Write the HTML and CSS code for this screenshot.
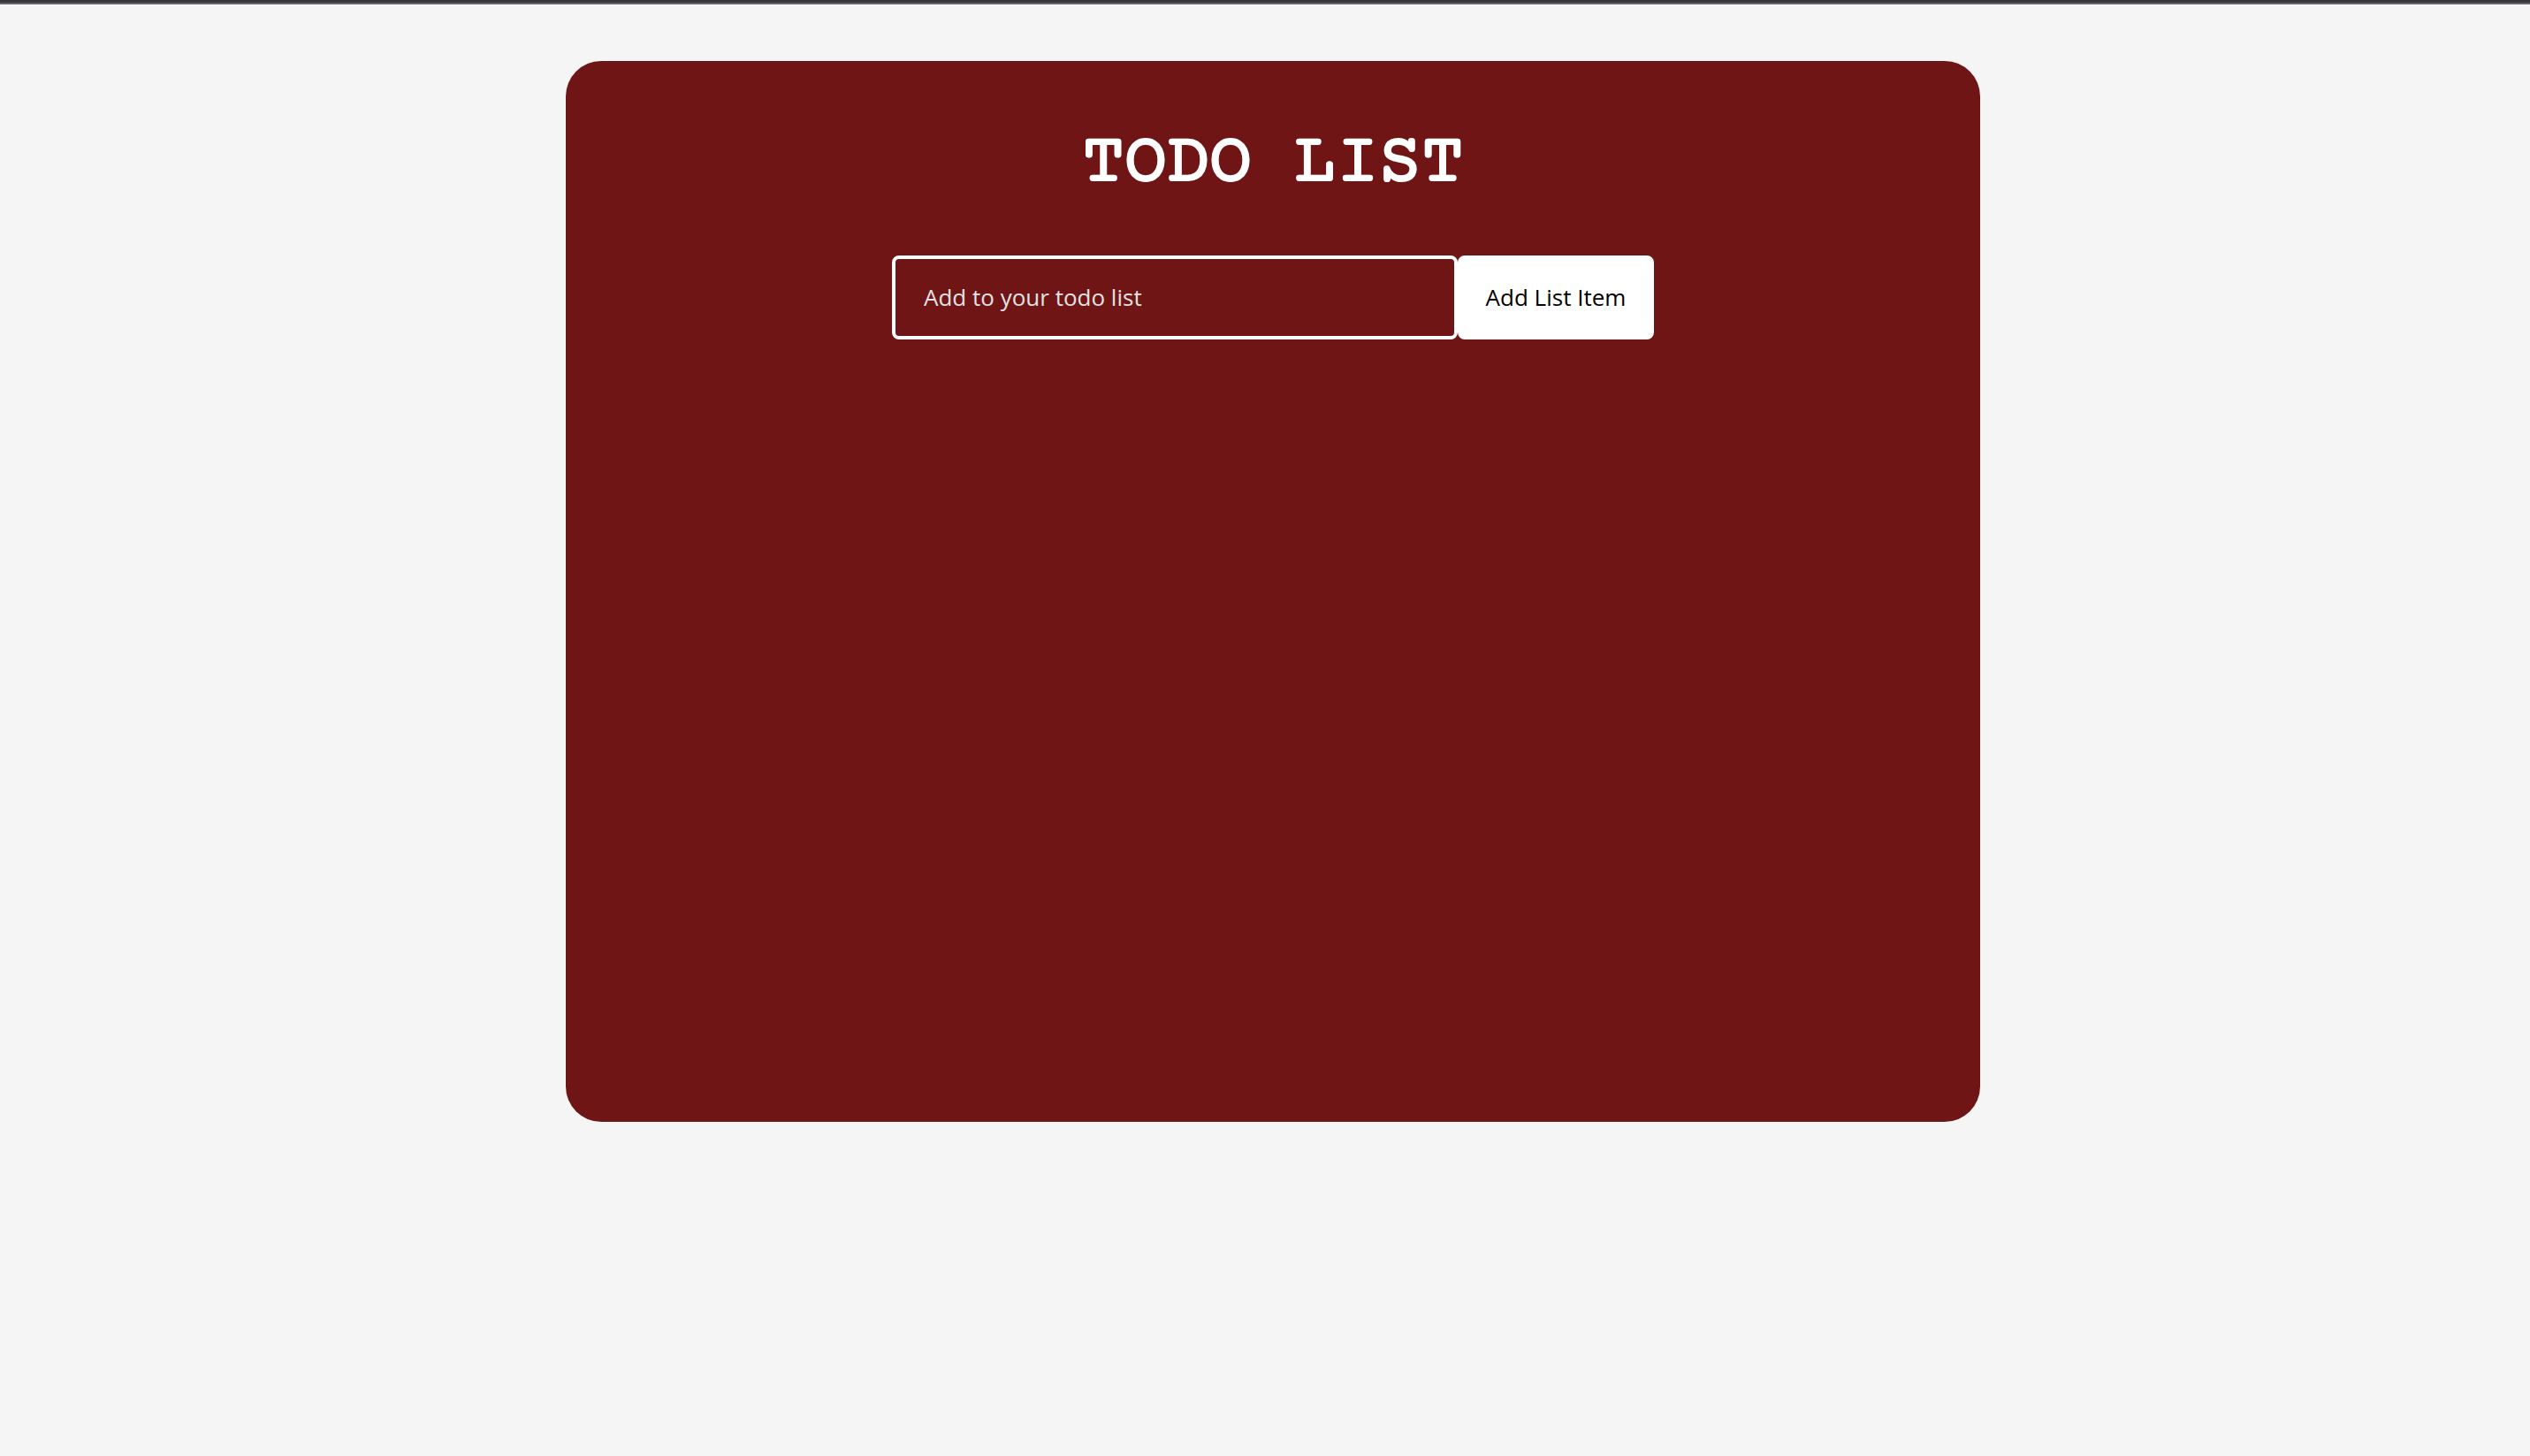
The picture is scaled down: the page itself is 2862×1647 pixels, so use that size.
FILE: index.html
```html
<!DOCTYPE html>
<html lang="en">
<head>
  <meta charset="utf-8">
  <meta name="viewport" content="width=device-width, initial-scale=1">
  <title>Todo List</title>
  <link rel="stylesheet" href="styles.css">
</head>
<body>
  <main class="todo-card">
    <h1 class="todo-title">TODO LIST</h1>
    <form class="todo-form">
      <input class="todo-input" type="text" placeholder="Add to your todo list" aria-label="Add to your todo list">
      <button class="todo-button" type="submit">Add List Item</button>
    </form>
  </main>
</body>
</html>
```
FILE: styles.css
```css
* {
  box-sizing: border-box;
}

body {
  margin: 0;
  padding: 64px 0 64px 18px;
  border-top: 3px solid #36373b;
  box-shadow: inset 0 2px #626367;
  background: #f5f5f5;
  font-family: "Trebuchet MS", "Open Sans", "Noto Sans", sans-serif;
}

.todo-card {
  width: calc(100% - 64px);
  max-width: 1600px;
  min-height: 1200px;
  margin: 2px auto 0;
  padding: 72px 32px;
  border-radius: 40px;
  background: #701516;
}

.todo-title {
  margin: 0 0 58px;
  color: #fff;
  font-family: "Courier Prime", "Nimbus Mono PS", "FreeMono", "Courier New", "Liberation Mono", monospace;
  font-size: 80px;
  font-weight: 400;
  -webkit-text-stroke: 2px #fff;
  line-height: 90px;
  text-align: center;
}

.todo-form {
  display: flex;
  justify-content: center;
}

.todo-input,
.todo-button {
  height: 95px;
  margin: 0;
  padding: 0 32px 2px;
  border: 4px solid #fff;
  border-radius: 8px;
  font-family: inherit;
  font-size: 26px;
  font-weight: 500;
}

.todo-input {
  flex: 0 1 640px;
  min-width: 0;
  background: transparent;
  color: #fff;
}

.todo-input::placeholder {
  color: #e2e2e2;
  opacity: 1;
}

.todo-button {
  flex: none;
  min-width: 222px;
  padding: 0 24px 2px;
  background: #fff;
  color: #000;
}
```
